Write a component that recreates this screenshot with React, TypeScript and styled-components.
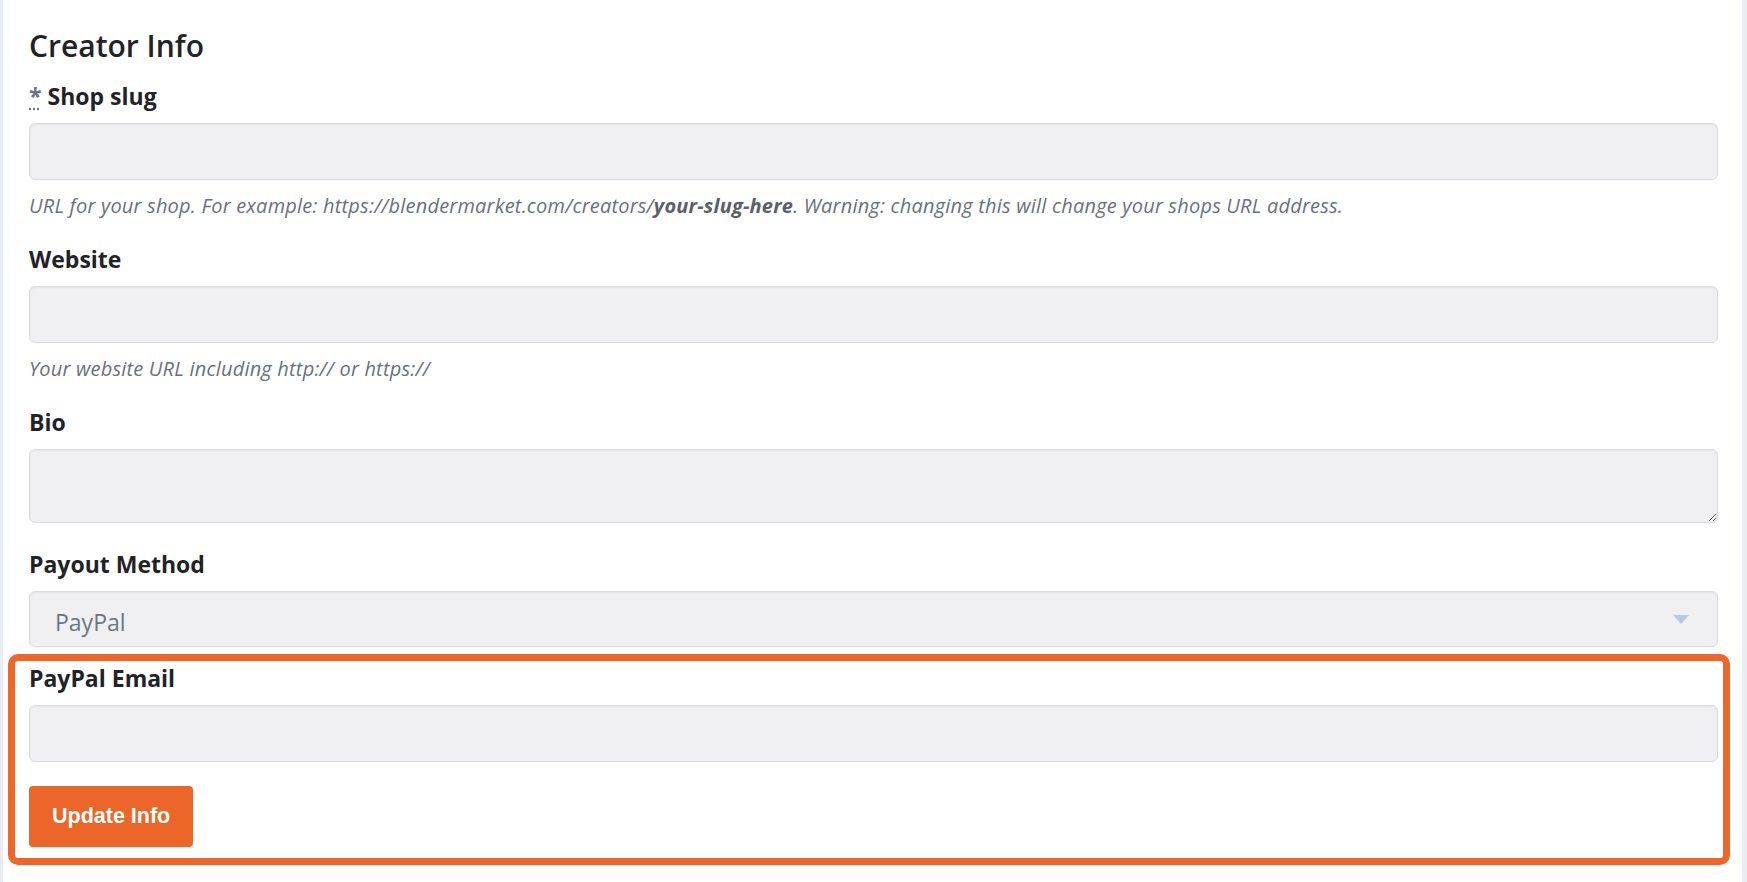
import React from 'react'
import styled, { createGlobalStyle } from 'styled-components'

const GlobalStyle = createGlobalStyle`
	html, body {
		margin: 0;
		padding: 0;
		background: #e9ecf0;
		font-family: 'Open Sans', 'Noto Sans', sans-serif;
	}
	* {
		box-sizing: border-box;
	}
`

const App: React.FC = () => {
	return (
		<Page>
			<GlobalStyle />
			<Card>
				<Heading>Creator Info</Heading>

				<FormGroup>
					<Label>
						<Required title="required">*</Required> Shop slug
					</Label>
					<Input type="text" />
					<HelpText>
						URL for your shop. For example: https://blendermarket.com/creators/<b>your-slug-here</b>. Warning:
						changing this will change your shops URL address.
					</HelpText>
				</FormGroup>

				<FormGroup>
					<Label>Website</Label>
					<Input type="text" />
					<HelpText>Your website URL including http:// or https://</HelpText>
				</FormGroup>

				<FormGroup>
					<Label>Bio</Label>
					<TextArea />
				</FormGroup>

				<FormGroup>
					<Label>Payout Method</Label>
					<SelectWrap>
						<Select defaultValue="paypal">
							<option value="paypal">PayPal</option>
							<option value="stripe">Stripe</option>
						</Select>
					</SelectWrap>
				</FormGroup>

				<Highlight>
					<Label>PayPal Email</Label>
					<Input type="email" />
					<SubmitButton type="button">Update Info</SubmitButton>
				</Highlight>
			</Card>
		</Page>
	)
}

export default App

const Page = styled.div`
	display: flex;
	min-height: 100vh;
	padding: 0 5px 0 3px;
`

const Card = styled.div`
	flex: 1;
	background: #fff;
	padding: 28px 24px 0 26px;
`

const Heading = styled.h2`
	margin: 0 0 18px;
	font-size: 30px;
	line-height: 36px;
	font-weight: 600;
	color: #1f2328;
`

const FormGroup = styled.div`
	margin-bottom: 27px;
`

const Label = styled.label`
	display: block;
	margin-bottom: 13px;
	font-size: 23px;
	line-height: 28px;
	font-weight: 700;
	color: #1f2328;
`

const Required = styled.abbr`
	color: #6c757d;
	text-decoration: underline dotted;
	text-underline-offset: 3px;
	cursor: help;
`

const fieldBase = `
	display: block;
	width: 100%;
	background: #f0f0f2;
	border: 1px solid #dadbde;
	border-radius: 6px;
	box-shadow: inset 0 1px 2px rgba(0, 0, 0, 0.05);
	font-family: 'Open Sans', 'Noto Sans', sans-serif;
	outline: none;
`

const Input = styled.input`
	${fieldBase}
	height: 57px;
	padding: 0 25px;
	font-size: 20px;
`

const TextArea = styled.textarea`
	${fieldBase}
	height: 74px;
	padding: 12px 25px;
	font-size: 20px;
	resize: vertical;
`

const SelectWrap = styled.div`
	position: relative;

	&::after {
		content: '';
		position: absolute;
		right: 29px;
		top: 24px;
		border-left: 8.5px solid transparent;
		border-right: 8.5px solid transparent;
		border-top: 9px solid #b9cad8;
		pointer-events: none;
	}
`

const Select = styled.select`
	${fieldBase}
	height: 56px;
	padding: 6px 25px 0;
	appearance: none;
	font-size: 23px;
	color: #6b7685;
`

const HelpText = styled.p`
	margin: 14px 0 0;
	font-size: 20px;
	line-height: 24px;
	letter-spacing: 0.2px;
	font-style: italic;
	color: #6a717b;

	b {
		font-weight: 700;
		color: #5a6068;
	}
`

const Highlight = styled.div`
	margin: -20px -12px 0 -21px;
	padding: 3px 5px 11px 14px;
	border: 7px solid #ec672b;
	border-radius: 10px;
`

const SubmitButton = styled.button`
	display: block;
	margin-top: 24px;
	height: 61px;
	padding: 0 23px;
	background: #ec6629;
	border: none;
	border-radius: 4px;
	color: #fff;
	font-family: 'Liberation Sans', Arial, sans-serif;
	font-size: 21.5px;
	font-weight: 700;
	cursor: pointer;
`
